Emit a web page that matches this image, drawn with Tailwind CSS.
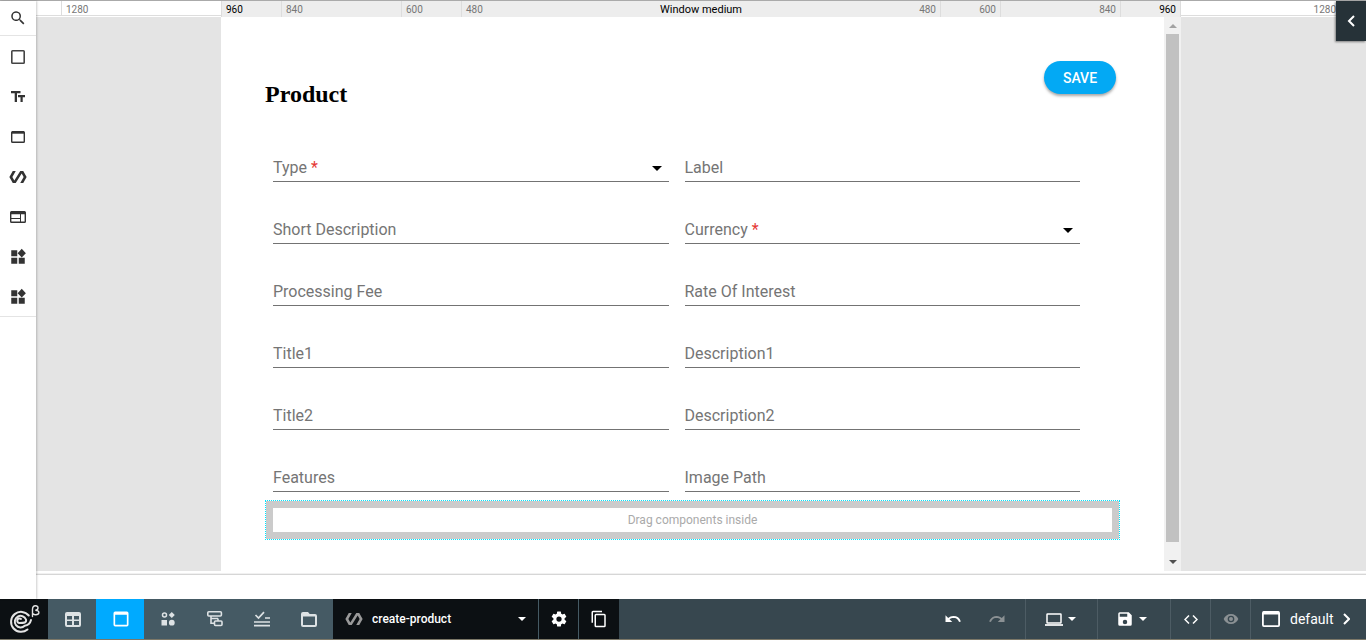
<!DOCTYPE html>
<html lang="en">
<head>
<meta charset="utf-8">
<meta name="viewport" content="width=device-width, initial-scale=1">
<title>create-product</title>
<script src="https://cdn.jsdelivr.net/npm/@tailwindcss/browser@4"></script>
</head>
<body class="flex h-screen flex-col overflow-hidden bg-white font-['Roboto',sans-serif] text-[#333]">
<svg class="hidden" aria-hidden="true">
  <symbol id="widgets" viewBox="0 0 24 24"><path d="M3 3h8v8H3zM3 13h8v8H3zM13 13h8v8h-8zM17 1l5.500 6L17 12.500 11.500 7z"/></symbol>
  <symbol id="polymer" viewBox="0 0 24 24"><path d="M19 4h-4L7.110 16.630 4.500 12 9 4H5L.5 12 5 20h4l7.890-12.630L19.500 12 15 20h4l4.500-8z"/></symbol>
  <symbol id="down" viewBox="0 0 10 5"><path d="M0 0h10L5 5z"/></symbol>
  <symbol id="tab" viewBox="0 0 24 24"><path d="M19 3H5a2 2 0 0 0-2 2v14a2 2 0 0 0 2 2h14a2 2 0 0 0 2-2V5a2 2 0 0 0-2-2zm0 16H5V7h14z"/></symbol>
</svg>

<main class="flex min-h-0 flex-1 border-t border-[#aaa]">
  <nav aria-label="Components" class="z-10 w-9 shrink-0 bg-white shadow-[1px_0_2px_rgba(0,0,0,0.2)]">
    <button aria-label="Search" class="flex h-[35px] w-full items-center justify-center border-b border-[#e4e4e4]"><svg class="size-[18px]" viewBox="0 0 24 24" fill="#333"><path d="M15.500 14h-.79l-.28-.27A6.500 6.500 0 1 0 13.730 14.430l.27.28v.79l5 5 1.500-1.500zm-6 0a4.500 4.500 0 1 1 0-9 4.500 4.500 0 0 1 0 9z"/></svg></button>
    <div class="border-b border-[#e4e4e4]">
      <button aria-label="Container" class="flex h-10 w-full items-center justify-center pt-px"><svg class="size-[14px]" viewBox="0 0 14 14" fill="none" stroke="#444" stroke-width="1.600"><rect x=".8" y=".8" width="12.400" height="12.400" rx=".8"/></svg></button>
      <button aria-label="Text" class="flex h-10 w-full items-center justify-center pt-px"><svg class="h-3 w-[14px]" viewBox="0 0 14 12" fill="#333"><path d="M0 0h9.500v2.300H6V11H3.700V2.300H0zM7 4h7v2.200h-2.300V11H9.500V6.200H7z"/></svg></button>
      <button aria-label="Window" class="flex h-10 w-full items-center justify-center pt-px"><svg class="h-3 w-[14px]" viewBox="0 0 14 12" fill="none" stroke="#333"><rect x=".7" y=".7" width="12.600" height="10.600" rx=".8" stroke-width="1.400"/><path d="M1 1.500h12" stroke-width="2.400"/></svg></button>
      <button aria-label="Polymer" class="flex h-10 w-full items-center justify-center pt-px"><svg class="size-[18px]" fill="#333"><use href="#polymer"/></svg></button>
      <button aria-label="Layout" class="flex h-10 w-full items-center justify-center pt-px"><svg class="h-3 w-4" viewBox="0 0 16 12" fill="none" stroke="#333"><rect x=".7" y=".7" width="14.600" height="10.600" rx=".8" stroke-width="1.400"/><path d="M1 2h14" stroke-width="2.500"/><path d="M1 7.500h9.500M10.500 3v8" stroke-width="1"/></svg></button>
      <button aria-label="Widgets" class="flex h-10 w-full items-center justify-center pt-px"><svg class="size-[18px]" fill="#333"><use href="#widgets"/></svg></button>
      <button aria-label="More widgets" class="flex h-10 w-full items-center justify-center pt-px"><svg class="size-[18px]" fill="#333"><use href="#widgets"/></svg></button>
    </div>
  </nav>

  <section class="flex min-w-0 flex-1 flex-col">
    <div class="flex h-4 shrink-0 justify-center overflow-hidden text-[10px] leading-[18px] text-[#777]">
      <div class="mb-px flex-1 border-b border-[#ddd]"></div>
      <div class="mb-px w-40 shrink-0 border-b border-l border-[#ddd] pl-1">1280</div>
      <div class="flex w-[960px] shrink-0 bg-[#ededed]">
        <div class="w-[60px] border-l border-[#ddd] pl-1 text-black">960</div>
        <div class="w-[120px] border-l border-[#ddd] pl-1">840</div>
        <div class="w-[60px] border-l border-[#ddd] pl-1">600</div>
        <div class="flex flex-1 justify-between border-x border-[#ddd] px-1"><span>480</span><span class="text-[11px] text-black">Window medium</span><span>480</span></div>
        <div class="w-[60px] border-r border-[#ddd] pr-1 text-right">600</div>
        <div class="w-[120px] border-r border-[#ddd] pr-1 text-right">840</div>
        <div class="w-[60px] border-r border-[#ddd] pr-1 text-right text-black">960</div>
      </div>
      <div class="mb-px w-40 shrink-0 border-b border-[#ddd] pr-[5px] text-right">1280</div>
      <div class="mb-px flex-1 border-b border-[#ddd]"></div>
    </div>

    <div class="flex min-h-0 flex-1 justify-center bg-[#e4e4e4]">
      <div class="flex w-[960px] bg-white">
        <form class="min-w-0 flex-1 px-11 pt-11">
          <div class="flex h-[94px] justify-between pr-1">
            <h1 class="pt-[19px] font-['Liberation_Serif',serif] text-2xl leading-7 font-bold text-black">Product</h1>
            <button type="button" class="h-[33px] w-[72px] rounded-full bg-[#03a9f4] text-sm leading-8 font-medium text-white shadow-[0_2px_3px_rgba(0,0,0,0.35)]">SAVE</button>
          </div>
          <div class="grid grid-cols-2 gap-x-4 pr-10 pl-2 text-base text-[#757575]">
            <div class="mb-[35px] grid h-[27px] items-center border-b border-[#737373]"><label for="type" class="pointer-events-none z-10 col-start-1 row-start-1">Type <span class="text-[#e53935]">*</span></label><select id="type" required class="col-start-1 row-start-1 h-full w-full appearance-none bg-transparent outline-none"><option value=""></option></select><svg class="pointer-events-none col-start-1 row-start-1 mr-[7px] h-[5px] w-[10px] justify-self-end" fill="#000"><use href="#down"/></svg></div>
            <div class="mb-[35px] grid h-[27px] items-center border-b border-[#737373]"><label for="label" class="pointer-events-none col-start-1 row-start-1">Label</label><input id="label" class="col-start-1 row-start-1 h-full w-full bg-transparent outline-none"></div>
            <div class="mb-[35px] grid h-[27px] items-center border-b border-[#737373]"><label for="short" class="pointer-events-none col-start-1 row-start-1">Short Description</label><input id="short" class="col-start-1 row-start-1 h-full w-full bg-transparent outline-none"></div>
            <div class="mb-[35px] grid h-[27px] items-center border-b border-[#737373]"><label for="currency" class="pointer-events-none z-10 col-start-1 row-start-1">Currency <span class="text-[#e53935]">*</span></label><select id="currency" required class="col-start-1 row-start-1 h-full w-full appearance-none bg-transparent outline-none"><option value=""></option></select><svg class="pointer-events-none col-start-1 row-start-1 mr-[7px] h-[5px] w-[10px] justify-self-end" fill="#000"><use href="#down"/></svg></div>
            <div class="mb-[35px] grid h-[27px] items-center border-b border-[#737373]"><label for="fee" class="pointer-events-none col-start-1 row-start-1">Processing Fee</label><input id="fee" class="col-start-1 row-start-1 h-full w-full bg-transparent outline-none"></div>
            <div class="mb-[35px] grid h-[27px] items-center border-b border-[#737373]"><label for="rate" class="pointer-events-none col-start-1 row-start-1">Rate Of Interest</label><input id="rate" class="col-start-1 row-start-1 h-full w-full bg-transparent outline-none"></div>
            <div class="mb-[35px] grid h-[27px] items-center border-b border-[#737373]"><label for="title1" class="pointer-events-none col-start-1 row-start-1">Title1</label><input id="title1" class="col-start-1 row-start-1 h-full w-full bg-transparent outline-none"></div>
            <div class="mb-[35px] grid h-[27px] items-center border-b border-[#737373]"><label for="desc1" class="pointer-events-none col-start-1 row-start-1">Description1</label><input id="desc1" class="col-start-1 row-start-1 h-full w-full bg-transparent outline-none"></div>
            <div class="mb-[35px] grid h-[27px] items-center border-b border-[#737373]"><label for="title2" class="pointer-events-none col-start-1 row-start-1">Title2</label><input id="title2" class="col-start-1 row-start-1 h-full w-full bg-transparent outline-none"></div>
            <div class="mb-[35px] grid h-[27px] items-center border-b border-[#737373]"><label for="desc2" class="pointer-events-none col-start-1 row-start-1">Description2</label><input id="desc2" class="col-start-1 row-start-1 h-full w-full bg-transparent outline-none"></div>
            <div class="mb-2 grid h-[27px] items-center border-b border-[#737373]"><label for="features" class="pointer-events-none col-start-1 row-start-1">Features</label><input id="features" class="col-start-1 row-start-1 h-full w-full bg-transparent outline-none"></div>
            <div class="mb-2 grid h-[27px] items-center border-b border-[#737373]"><label for="image" class="pointer-events-none col-start-1 row-start-1">Image Path</label><input id="image" class="col-start-1 row-start-1 h-full w-full bg-transparent outline-none"></div>
          </div>
          <div class="border border-dotted border-[#00e5ff] bg-[#cbcbcb] bg-clip-padding p-[7px]"><div class="bg-white text-center text-xs leading-6 text-[#aaa]">Drag components inside</div></div>
        </form>
        <div class="flex w-[17px] shrink-0 flex-col items-center bg-[#f1f1f1]" aria-hidden="true">
          <div class="flex h-[17px] items-center"><svg class="h-1 w-2" viewBox="0 0 8 4" fill="#a3a3a3"><path d="M0 4h8L4 0z"/></svg></div>
          <div class="w-[13px] flex-1 bg-[#c1c1c1]"></div>
          <div class="flex h-[29px] items-center pt-[10px]"><svg class="h-1 w-2" viewBox="0 0 8 4" fill="#505050"><path d="M0 0h8L4 4z"/></svg></div>
        </div>
      </div>
    </div>
    <div class="h-7 shrink-0 pt-[2px]"><div class="h-[2px] border-b border-[#d6d6d6] bg-[#f1f1f1]"></div></div>
  </section>

  <button aria-label="Open panel" class="absolute top-px right-0 z-20 flex h-10 w-[30px] items-center justify-center bg-[#263238] shadow-[-1px_1px_2px_rgba(0,0,0,0.45)]"><svg class="h-3 w-2" viewBox="0 0 8 12" fill="none" stroke="#fff" stroke-width="2"><path d="M7 1 2 6l5 5"/></svg></button>
</main>

<footer class="flex h-[41px] shrink-0 border-b border-[#7c7868] bg-[#37474f] text-white">
  <a href="#" aria-label="Home" class="flex w-12 shrink-0 items-center justify-center bg-[#0c1013]">
    <svg class="h-[30px] w-[34px]" viewBox="0 0 34 30" fill="none" stroke="#e4e4e4" stroke-linecap="round"><path d="M20.500 25.500A10 10 0 1 1 21.800 11.500M17.700 21.800A5.800 5.800 0 1 1 19 15.500c.8 3.300-2 3.600-6.500 3.600a2.300 2.300 0 1 1 1.500-4.100M17.700 21.800c3.300-.5 5.500-2.500 6.300-5.800" stroke-width="2"/><path d="M25.500 12.500V5.500c0-5 6-4.500 5.500-1.300-.2 1.500-1.500 2-2.700 2 5.200 0 4.500 5-.3 4.500-1.300-.1-2.200-.8-2.500-1.700" stroke-width="1.400"/></svg>
  </a>
  <div class="flex w-[285px] shrink-0 bg-[#455a64]">
    <button aria-label="Grid" class="flex flex-1 items-center justify-center pl-px"><svg class="h-[15px] w-4" viewBox="0 0 16 15" fill="#dde2e4"><path fill-rule="evenodd" d="M2 0h12a2 2 0 0 1 2 2v11a2 2 0 0 1-2 2H2a2 2 0 0 1-2-2V2a2 2 0 0 1 2-2zm0 4v3.500h5V4zm7 0v3.500h5V4zM2 9v4h5V9zm7 0v4h5V9z"/></svg></button>
    <button aria-label="Forms" class="flex flex-1 items-center justify-center bg-[#00aaff] pl-px"><svg class="size-5" fill="#fff"><use href="#tab"/></svg></button>
    <button aria-label="Components" class="flex flex-1 items-center justify-center"><svg class="size-[14px]" viewBox="0 0 14 14" fill="#dde2e4"><circle cx="3.500" cy="3" r="2" fill="none" stroke="#dde2e4" stroke-width="1.500"/><path d="m10.800 0 3 3-3 3-3-3zM.5 8h5.500v5.500H.5z"/><circle cx="10.800" cy="10.700" r="2.900"/></svg></button>
    <button aria-label="Structure" class="flex flex-1 items-center justify-center"><svg class="size-4" viewBox="0 0 16 16" fill="none" stroke="#dde2e4" stroke-width="1.600"><rect x=".8" y=".8" width="13.600" height="4.200" rx="1"/><rect x="7.500" y="10" width="7.500" height="4.500" rx="1"/><path d="M4 5v7.200h3.500M11 7.500V10M4 7.500h7"/></svg></button>
    <button aria-label="Tasks" class="flex flex-1 items-center justify-center"><svg class="size-4" viewBox="0 0 16 16" fill="none" stroke="#dde2e4" stroke-width="1.700"><path d="m1.500 4 3 3L10 1.200M11 7h5M0 11h16M0 14.700h16"/></svg></button>
    <button aria-label="Files" class="flex flex-1 items-center justify-center"><svg class="h-[15px] w-4" viewBox="0 0 16 15" fill="#dde2e4"><path fill-rule="evenodd" d="M2 0h5l1.700 2H14a2 2 0 0 1 2 2v9a2 2 0 0 1-2 2H2a2 2 0 0 1-2-2V2a2 2 0 0 1 2-2zm0 4.500V13h12V4.500z"/></svg></button>
  </div>
  <button class="flex w-[206px] shrink-0 items-center border-r border-[#455a64] bg-[#0c1013] px-3 text-xs font-medium"><svg class="mr-[9px] size-[18px]" fill="#999"><use href="#polymer"/></svg>create-product<svg class="ml-auto h-1 w-2" fill="#fff"><use href="#down"/></svg></button>
  <button aria-label="Settings" class="flex w-10 shrink-0 items-center justify-center border-r border-[#455a64] bg-[#0c1013]"><svg class="size-[18px]" viewBox="0 0 24 24" fill="#fff"><path d="M19.430 12.980c.04-.32.07-.64.07-.98s-.03-.66-.07-.98l2.110-1.650a.5.5 0 0 0 .12-.64l-2-3.460a.5.5 0 0 0-.61-.22l-2.490 1a7.300 7.300 0 0 0-1.690-.98l-.38-2.650A.49.49 0 0 0 14 2h-4a.49.49 0 0 0-.49.42l-.38 2.650c-.61.25-1.170.59-1.690.98l-2.490-1a.5.5 0 0 0-.61.22l-2 3.460a.5.5 0 0 0 .12.640l2.110 1.650a8 8 0 0 0 0 1.960l-2.110 1.650a.5.5 0 0 0-.12.640l2 3.460c.12.220.39.300.61.220l2.490-1c.52.400 1.080.730 1.690.980l.38 2.650c.03.240.24.420.49.420h4c.25 0 .46-.18.49-.42l.38-2.650c.61-.25 1.170-.59 1.690-.98l2.490 1c.23.090.49 0 .61-.22l2-3.460a.5.5 0 0 0-.12-.64zM12 15.500a3.500 3.500 0 1 1 0-7 3.500 3.500 0 0 1 0 7z"/></svg></button>
  <button aria-label="Copy" class="flex w-10 shrink-0 items-center justify-center bg-[#0c1013]"><svg class="size-[18px]" viewBox="0 0 24 24" fill="#fff"><path d="M16 1H4a2 2 0 0 0-2 2v14h2V3h12zm3 4H8a2 2 0 0 0-2 2v14a2 2 0 0 0 2 2h11a2 2 0 0 0 2-2V7a2 2 0 0 0-2-2zm0 16H8V7h11z"/></svg></button>

  <div class="ml-auto flex shrink-0 divide-x divide-[#4d5c64]">
    <div class="flex pr-[6px]">
      <button aria-label="Undo" class="flex w-11 items-center justify-center"><svg class="size-[18px]" viewBox="0 0 24 24" fill="#fff"><path d="M12.500 8c-2.650 0-5.050.99-6.900 2.600L2 7v9h9l-3.620-3.620a8 8 0 0 1 12.720 3.620l2.370-.78A10.500 10.500 0 0 0 12.500 8z"/></svg></button>
      <button aria-label="Redo" class="flex w-11 items-center justify-center"><svg class="size-[18px]" viewBox="0 0 24 24" fill="#8b9194"><path d="M18.400 10.600A10.500 10.500 0 0 0 1.530 15.220l2.370.78a8 8 0 0 1 12.720-3.620L13 16h9V7z"/></svg></button>
    </div>
    <button aria-label="Device" class="flex w-[72px] items-center justify-center gap-[5px] pr-[3px]"><svg class="h-[13px] w-[18px]" viewBox="0 0 18 13" fill="none" stroke="#fff"><rect x="2" y="1" width="14" height="9" rx=".5" stroke-width="1.500"/><path d="M0 12h18" stroke-width="1.700"/></svg><svg class="h-1 w-2" fill="#fff"><use href="#down"/></svg></button>
    <button aria-label="Save" class="flex w-[73px] items-center justify-center gap-[5px] pr-[5px]"><svg class="size-[18px]" viewBox="0 0 24 24" fill="#fff"><path d="M17 3H5a2 2 0 0 0-2 2v14a2 2 0 0 0 2 2h14a2 2 0 0 0 2-2V7zm-5 16a3 3 0 1 1 0-6 3 3 0 0 1 0 6zm3-10H5V5h10z"/></svg><svg class="h-1 w-2" fill="#fff"><use href="#down"/></svg></button>
    <button aria-label="Code" class="flex w-10 items-center justify-center"><svg class="h-[9px] w-[14px]" viewBox="0 0 14 9" fill="none" stroke="#fff" stroke-width="1.500"><path d="M5 .5 1 4.500l4 4M9 .5l4 4-4 4"/></svg></button>
    <button aria-label="Preview" class="flex w-10 items-center justify-center"><svg class="size-4" viewBox="0 0 24 24" fill="#8b9194"><path d="M12 4.500C7 4.500 2.730 7.610 1 12c1.730 4.390 6 7.500 11 7.500s9.270-3.110 11-7.500c-1.730-4.390-6-7.500-11-7.500zM12 17a5 5 0 1 1 0-10 5 5 0 0 1 0 10zm0-8a3 3 0 1 0 0 6 3 3 0 0 0 0-6z"/></svg></button>
    <button class="flex w-[115px] items-center pl-[11px] text-sm"><svg class="mr-[10px] h-4 w-[18px]" viewBox="0 0 18 16" fill="none" stroke="#fff"><rect x=".9" y=".9" width="16.200" height="14.200" rx="1" stroke-width="1.800"/><path d="M1 2h16" stroke-width="3"/></svg>default<svg class="ml-[9px] h-3 w-[7px]" viewBox="0 0 7 12" fill="none" stroke="#fff" stroke-width="2"><path d="m1 1 5 5-5 5"/></svg></button>
  </div>
</footer>
</body>
</html>
